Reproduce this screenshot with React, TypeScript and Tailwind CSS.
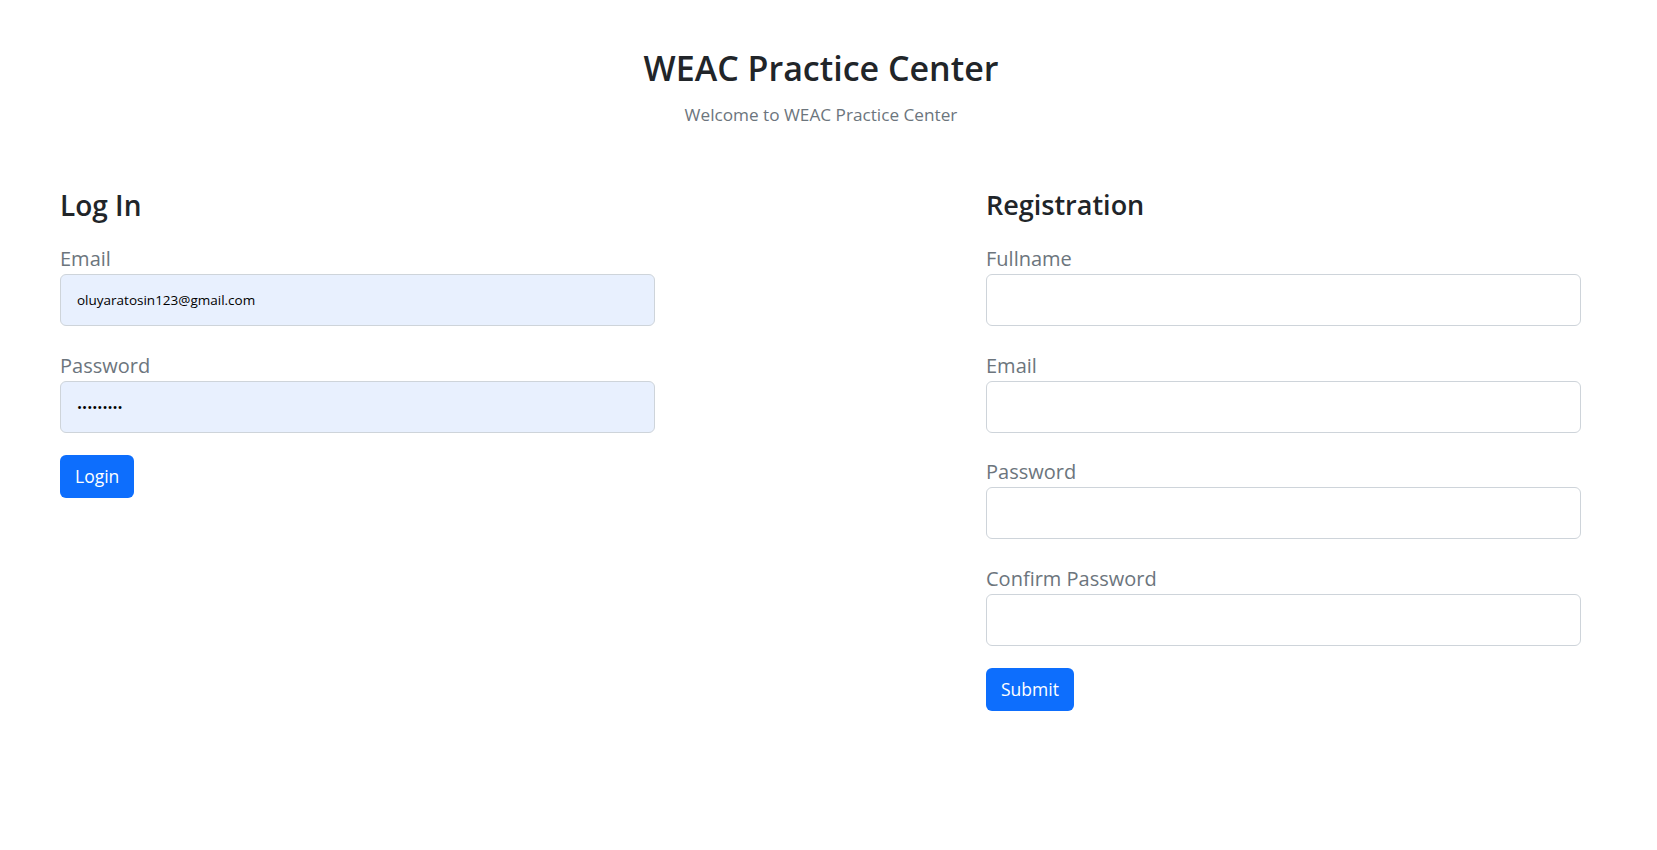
import React from 'react';

const font = { fontFamily: '"Open Sans", "Noto Sans", Arial, sans-serif' };

interface FieldProps {
  label: string;
  type?: string;
  value?: string;
  filled?: boolean;
}

const Field: React.FC<FieldProps> = ({ label, type = 'text', value, filled }) => (
  <div className="mb-[24.5px]">
    <label className="block text-[20px] leading-[30px] text-[#6c757d]">{label}</label>
    <input
      type={type}
      defaultValue={value}
      className={`block w-full h-[52px] px-4 rounded-[6px] border border-[#ced4da] text-[13.5px] text-black outline-none ${filled ? 'bg-[#e8f0fe]' : 'bg-white'}`}
    />
  </div>
);

const App: React.FC = () => {
  return (
    <div className="min-h-screen bg-white text-[#212529]" style={font}>
      <div className="w-[1642px]">
        <div className="pt-[45px] text-center">
          <h1 className="text-[34px] leading-[46px] font-semibold">WEAC Practice Center</h1>
          <p className="mt-[10px] text-[17.2px] leading-[27px] text-[#6c757d]">Welcome to WEAC Practice Center</p>
        </div>

        <div className="flex justify-between pl-[60px] pr-[61px] mt-[60px]">
          {/* Log in */}
          <div className="w-[595px]">
            <h2 className="text-[28px] leading-[34px] font-semibold mb-[22px]">Log In</h2>
            <Field label="Email" value="oluyaratosin123@gmail.com" filled />
            <Field label="Password" type="password" value="123456789" filled />
            <button className="h-[43px] px-[15px] rounded-[6px] bg-[#0d6efd] text-white text-[17.5px] -mt-[2px]">Login</button>
          </div>

          {/* Registration */}
          <div className="w-[595px]">
            <h2 className="text-[27px] leading-[34px] font-semibold mb-[22px]">Registration</h2>
            <Field label="Fullname" />
            <Field label="Email" />
            <Field label="Password" type="password" />
            <Field label="Confirm Password" type="password" />
            <button className="h-[43px] px-[15px] rounded-[6px] bg-[#0d6efd] text-white text-[17.5px] -mt-[2px]">Submit</button>
          </div>
        </div>
      </div>
    </div>
  );
};

export default App;
